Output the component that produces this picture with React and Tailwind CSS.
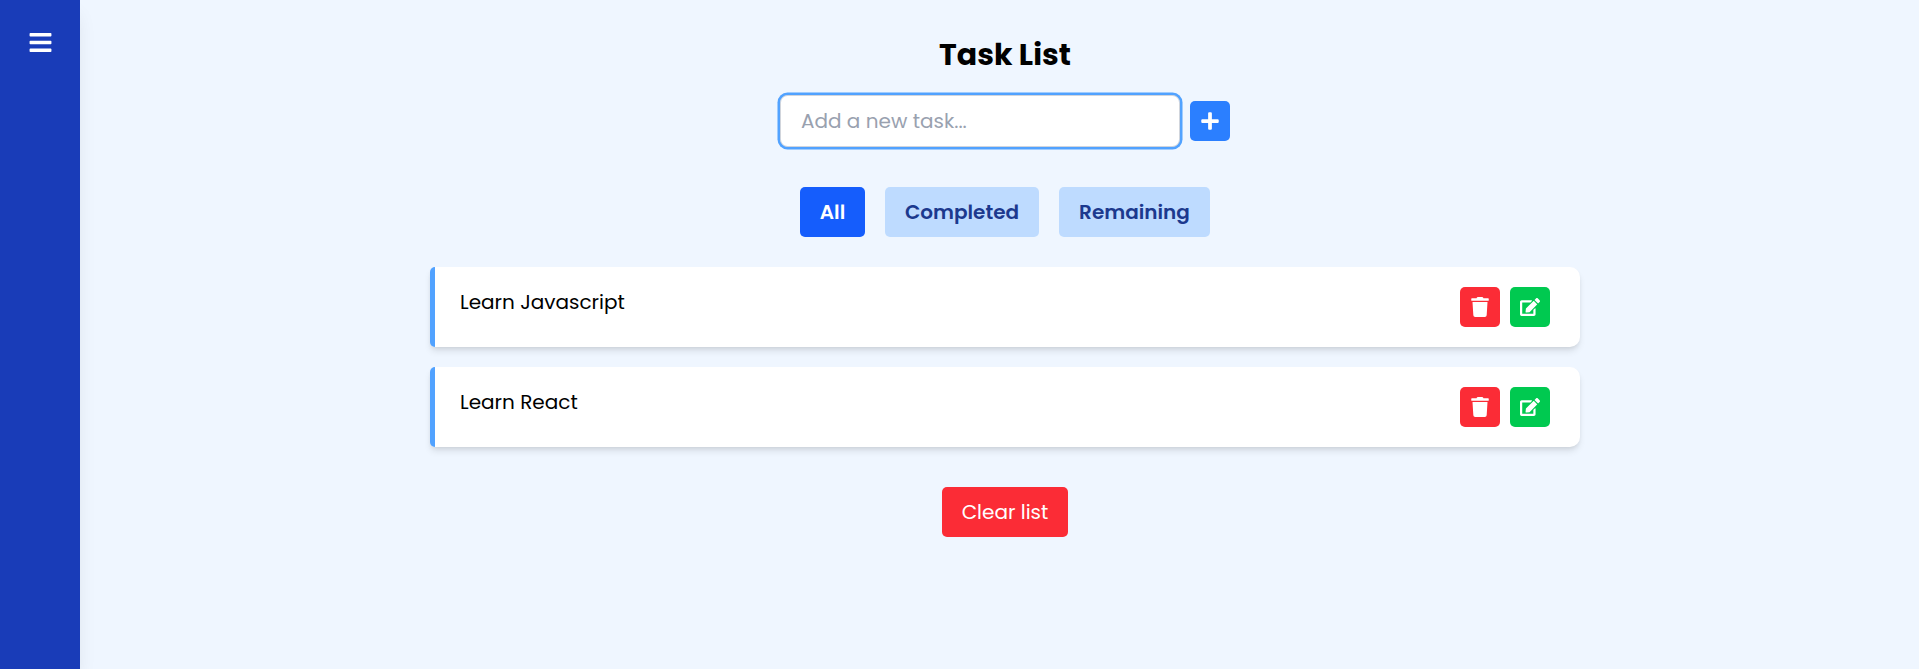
import { FaBars, FaEdit, FaPlus, FaTrash } from "react-icons/fa";

const tasks = ["Learn Javascript", "Learn React"];

function TaskItem({ title }) {
  return (
    <li className="flex h-20 items-start justify-between rounded-l-[5px] rounded-r-[10px] border-l-5 border-[#51a2ff] bg-white py-5 pr-[30px] pl-[25px] shadow-[0_5px_7.5px_-1px_rgba(0,0,0,0.1),0_2.5px_5px_-2.5px_rgba(0,0,0,0.1)]">
      <span>{title}</span>
      <div className="flex gap-2.5">
        <button aria-label="Delete" className="flex size-10 items-center justify-center rounded-[5px] bg-[#fb2c36] text-white">
          <FaTrash size={20} />
        </button>
        <button aria-label="Edit" className="flex size-10 items-center justify-center rounded-[5px] bg-[#00c950] text-white">
          <FaEdit size={20} />
        </button>
      </div>
    </li>
  );
}

export default function App() {
  return (
    <div className="flex h-screen overflow-hidden bg-[#eff6ff] font-[Poppins,Inter,sans-serif] text-[20px] leading-[30px] text-black">
      <aside className="w-20 shrink-0 bg-[#193cb8] pt-[30px] shadow-[0_12px_19px_-4px_rgba(0,0,0,0.1)]">
        <FaBars size={25} className="mx-auto text-white" />
      </aside>
      <main className="ml-[11px] flex flex-1 flex-col items-center pt-[35px]">
        <h1 className="text-[30px] leading-[40px] font-bold">Task List</h1>
        <div className="mt-5 flex items-center gap-2.5">
          <input
            placeholder="Add a new task..."
            className="h-[52px] w-[400px] rounded-[7.5px] border border-[#d1d5dc] bg-white px-5 text-[20px] ring-[2.5px] ring-[#51a2ff] outline-none placeholder:text-[#99a1af]"
          />
          <button aria-label="Add" className="flex size-10 items-center justify-center rounded-[5px] bg-[#2b7fff] text-white">
            <FaPlus size={20} />
          </button>
        </div>
        <div className="mt-10 flex gap-5 font-semibold">
          <button className="h-[50px] w-[65px] rounded-[5px] bg-[#155dfc] text-white">All</button>
          <button className="h-[50px] w-[154px] rounded-[5px] bg-[#bedbff] text-[#1c398e]">Completed</button>
          <button className="h-[50px] w-[151px] rounded-[5px] bg-[#bedbff] text-[#1c398e]">Remaining</button>
        </div>
        <ul className="mt-[30px] flex w-[1150px] flex-col gap-5">
          {tasks.map((t) => (
            <TaskItem key={t} title={t} />
          ))}
        </ul>
        <button className="mt-10 h-[50px] w-[126px] rounded-[5px] bg-[#fb2c36] text-white">Clear list</button>
      </main>
    </div>
  );
}
